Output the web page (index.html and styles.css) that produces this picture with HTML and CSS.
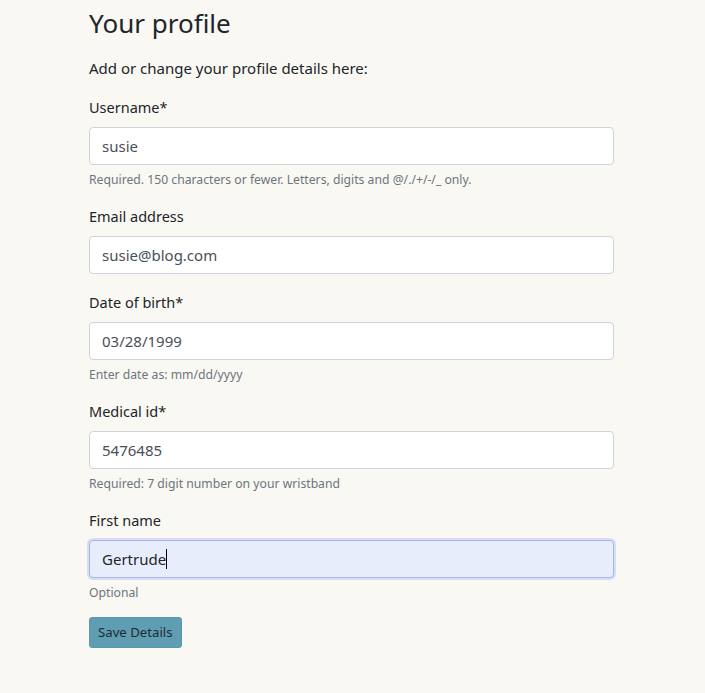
FILE: index.html
```html
<!DOCTYPE html>
<html lang="en">
<head>
<meta charset="utf-8">
<title>Your profile</title>
<link rel="stylesheet" href="styles.css">
</head>
<body>
<main class="container">
  <h2 class="title">Your profile</h2>
  <p class="intro">Add or change your profile details here:</p>
  <form class="form">
    <div class="form-group">
      <label class="label" for="username">Username*</label>
      <input class="input" id="username" type="text" value="susie">
      <small class="help">Required. 150 characters or fewer. Letters, digits and @/./+/-/_ only.</small>
    </div>
    <div class="form-group">
      <label class="label" for="email">Email address</label>
      <input class="input" id="email" type="text" value="susie@blog.com">
    </div>
    <div class="form-group">
      <label class="label" for="dob">Date of birth*</label>
      <input class="input" id="dob" type="text" value="03/28/1999">
      <small class="help">Enter date as: mm/dd/yyyy</small>
    </div>
    <div class="form-group">
      <label class="label" for="medid">Medical id*</label>
      <input class="input" id="medid" type="text" value="5476485">
      <small class="help">Required: 7 digit number on your wristband</small>
    </div>
    <div class="form-group">
      <label class="label" for="fname">First name</label>
      <div class="input input-focus" id="fname">Gertrude<span class="caret"></span></div>
      <small class="help">Optional</small>
    </div>
    <button class="btn" type="button">Save Details</button>
  </form>
</main>
</body>
</html>
```
FILE: styles.css
```css
* { box-sizing: border-box; }
html, body { margin: 0; padding: 0; }
body {
  background: #faf8f3;
  color: #212529;
  font-family: "Noto Sans", "Open Sans", sans-serif;
  font-size: 15px;
  line-height: 24px;
}
.container {
  width: 525px;
  margin-left: 89px;
  padding-top: 6px;
}
.title {
  margin: 0 0 16px 0;
  font-size: 26px;
  font-weight: 400;
  line-height: 34px;
}
.intro { margin: 0 0 15px 0; }
.form-group { margin-bottom: 16px; }
.label { display: block; margin-bottom: 8px; font-size: 14.5px; }
.input {
  display: block;
  width: 100%;
  height: 38px;
  padding: 6px 12px;
  font-family: inherit;
  font-size: 15px;
  line-height: 24px;
  color: #495057;
  background: #fff;
  border: 1px solid #ced4da;
  border-radius: 4px;
  outline: none;
}
.input-focus {
  background: #e8edfc;
  border-color: #a9b6ea;
  box-shadow: 0 0 0 2px #d6ddf7;
  color: #212529;
}
.caret {
  display: inline-block;
  width: 1px;
  height: 20px;
  background: #000;
  vertical-align: -4px;
}
.help {
  display: block;
  margin-top: 5px;
  margin-bottom: -1px;
  font-size: 12.2px;
  line-height: 19px;
  color: #6c757d;
}
.btn {
  display: block;
  height: 31px;
  padding: 0 8px;
  font-family: inherit;
  font-size: 13.2px;
  line-height: 29px;
  color: #1f2b31;
  background: #5f9db2;
  border: 1px solid #5a97ac;
  border-radius: 3px;
}
```
